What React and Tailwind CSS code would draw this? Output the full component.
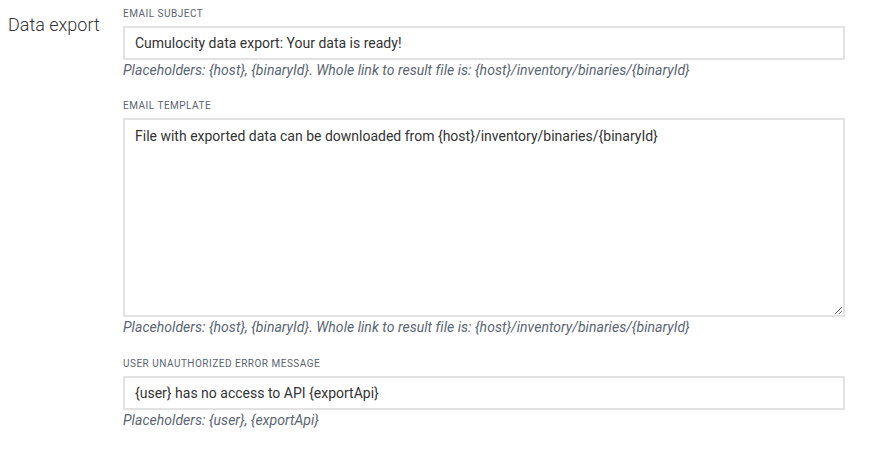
import React from "react";

const font = { fontFamily: "Roboto, 'Liberation Sans', sans-serif" };

function Label({ children }) {
  return (
    <div className="text-[10px] leading-[14px] uppercase tracking-[0.5px] text-[#5b6470] mb-[5px]">
      {children}
    </div>
  );
}

function Help({ children }) {
  return (
    <div className="text-[14px] leading-[20px] italic tracking-[0.04px] text-[#5a6572]">{children}</div>
  );
}

export default function App() {
  return (
    <div className="w-[887px] h-[458px] bg-white flex" style={font}>
      <div className="w-[123px] pl-[8px] pt-[13px] shrink-0">
        <div className="text-[18px] leading-[24px] font-light text-[#333]">Data export</div>
      </div>
      <div className="w-[722px] pt-[7px] flex flex-col">
        <div className="mb-[19px]">
          <Label>Email subject</Label>
          <input
            readOnly
            value="Cumulocity data export: Your data is ready!"
            className="block w-full h-[34px] border-2 border-[#e2e2e2] px-[10px] py-[5px] text-[14px] leading-[20px] text-[#333] outline-none bg-white"
            style={font}
          />
          <Help>
            Placeholders: {"{host}"}, {"{binaryId}"}. Whole link to result file is: {"{host}"}/inventory/binaries/{"{binaryId}"}
          </Help>
        </div>
        <div className="mb-[20px]">
          <Label>Email template</Label>
          <textarea
            readOnly
            value="File with exported data can be downloaded from {host}/inventory/binaries/{binaryId}"
            className="block w-full h-[199px] border-2 border-[#e2e2e2] px-[10px] py-[6px] text-[14px] leading-[20px] text-[#333] outline-none bg-white resize-y"
            style={font}
          />
          <Help>
            Placeholders: {"{host}"}, {"{binaryId}"}. Whole link to result file is: {"{host}"}/inventory/binaries/{"{binaryId}"}
          </Help>
        </div>
        <div>
          <Label>User unauthorized error message</Label>
          <input
            readOnly
            value="{user} has no access to API {exportApi}"
            className="block w-full h-[34px] border-2 border-[#e2e2e2] px-[10px] py-[5px] text-[14px] leading-[20px] text-[#333] outline-none bg-white"
            style={font}
          />
          <Help>Placeholders: {"{user}"}, {"{exportApi}"}</Help>
        </div>
      </div>
    </div>
  );
}
